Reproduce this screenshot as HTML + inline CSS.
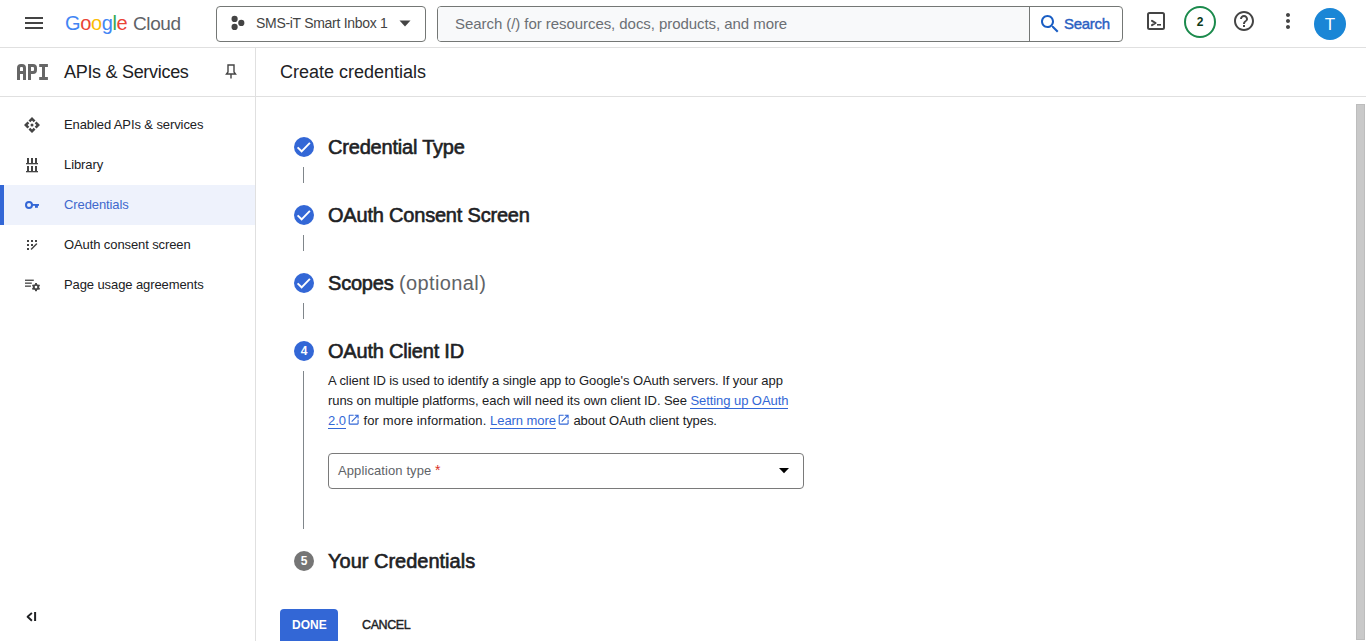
<!DOCTYPE html>
<html><head><meta charset="utf-8">
<style>
*{box-sizing:border-box;margin:0;padding:0}
html,body{width:1366px;height:641px;overflow:hidden;background:#fff;font-family:"Liberation Sans",sans-serif;color:#202124}
.abs{position:absolute}
.t{position:absolute;white-space:nowrap;line-height:1}
svg{position:absolute;overflow:visible}
#topbar{position:absolute;left:0;top:0;width:1366px;height:48px;background:#fff;border-bottom:1px solid #e0e0e0}
#side{position:absolute;left:0;top:48px;width:256px;height:593px;border-right:1px solid #e0e0e0;background:#fff}
#hdr2{position:absolute;left:256px;top:48px;width:1110px;height:49px;border-bottom:1px solid #e0e0e0}
.sbline{position:absolute;left:0;top:96px;width:256px;height:1px;background:#e0e0e0}
.navtxt{position:absolute;left:64px;font-size:13px;color:#202124;white-space:nowrap;line-height:1;letter-spacing:-0.1px}
.step{position:absolute;left:294px;width:20px;height:20px;border-radius:50%;background:#3367d6;color:#fff;font-size:12px;font-weight:bold;text-align:center;line-height:20px}
.stitle{position:absolute;left:328px;font-size:20px;color:#202124;white-space:nowrap;line-height:1;letter-spacing:-0.2px;-webkit-text-stroke:0.6px #202124}
.vl{position:absolute;left:303px;width:1px;background:#80868b}
a{color:#3367d6;text-decoration:none;border-bottom:1px solid #3367d6}
.ext{display:inline-block;width:14px;height:12px;position:relative;vertical-align:-1px}
</style></head><body>
<div id="topbar"></div>
<div id="side"></div>
<div class="sbline"></div>
<div id="hdr2"></div>

<!-- hamburger -->
<div class="abs" style="left:25px;top:17px;width:18px;height:2px;background:#444444"></div>
<div class="abs" style="left:25px;top:22px;width:18px;height:2px;background:#444444"></div>
<div class="abs" style="left:25px;top:27px;width:18px;height:2px;background:#444444"></div>

<!-- Google Cloud logo -->
<div class="t" id="logo" style="left:65px;top:13px;font-size:20px;letter-spacing:-0.4px"><span style="color:#4285f4">G</span><span style="color:#ea4335">o</span><span style="color:#fbbc04">o</span><span style="color:#4285f4">g</span><span style="color:#34a853">l</span><span style="color:#ea4335">e</span></div>
<div class="t" id="cloud" style="left:133px;top:13.5px;font-size:19px;letter-spacing:-0.4px;color:#5f6368">Cloud</div>

<!-- project picker -->
<div class="abs" style="left:216px;top:6px;width:210px;height:36px;border:1px solid #747775;border-radius:4px"></div>
<svg style="left:0;top:0" width="1" height="1"><g fill="#444444"><circle cx="234.6" cy="18.9" r="3.1"/><circle cx="241.3" cy="22.9" r="3.1"/><circle cx="234.6" cy="26.9" r="3.1"/></g>
<path d="M399.5,20.5 H410.5 L405,26.5 Z" fill="#444444"/></svg>
<div class="t" id="proj" style="left:256px;top:16px;font-size:14px;color:#444444;letter-spacing:-0.3px">SMS-iT Smart Inbox 1</div>

<!-- search -->
<div class="abs" style="left:437px;top:6px;width:686px;height:36px;border:1px solid #747775;border-radius:4px;background:#fff;overflow:hidden">
  <div class="abs" style="left:0;top:0;width:592px;height:34px;background:#f8f9fa;border-right:1px solid #747775"></div>
</div>
<div class="t" id="srch" style="left:455px;top:16px;font-size:15px;color:#6b6f74;letter-spacing:-0.06px">Search (/) for resources, docs, products, and more</div>
<svg style="left:1038px;top:12px" width="24" height="24" viewBox="0 0 24 24"><path fill="#1a5ec4" d="M15.5 14h-.79l-.28-.27C15.41 12.59 16 11.11 16 9.5 16 5.910 13.09 3 9.5 3S3 5.91 3 9.5 5.91 16 9.5 16c1.61 0 3.09-.59 4.23-1.57l.27.28v.79l5 4.99L20.49 19l-4.99-5zm-6 0C7.01 14 5 11.99 5 9.5S7.01 5 9.5 5 14 7.01 14 9.5 11.99 14 9.5 14z"/></svg>
<div class="t" id="sbtn" style="left:1064px;top:16px;font-size:15px;color:#2a60c2;letter-spacing:-0.3px;-webkit-text-stroke:0.4px #2a60c2">Search</div>

<!-- terminal -->
<svg style="left:0;top:0" width="1" height="1">
<rect x="1148" y="13" width="16" height="16" rx="1.5" fill="none" stroke="#444444" stroke-width="2"/>
<path d="M1152,20.8 L1155.6,23 L1152,25.2" fill="none" stroke="#444444" stroke-width="2" stroke-linejoin="round" stroke-linecap="round"/>
<rect x="1157" y="24" width="4" height="1.6" fill="#444444"/>
</svg>
<!-- badge -->
<div class="abs" style="left:1184px;top:6px;width:32px;height:32px;border:2px solid #1b8a4c;border-radius:50%"></div>
<div class="t" style="left:1184px;top:16.3px;width:32px;text-align:center;font-size:12px;font-weight:bold;color:#0d3b1a">2</div>
<!-- help -->
<svg style="left:1232px;top:9px" width="24" height="24" viewBox="0 0 24 24"><path fill="#444444" d="M11 18h2v-2h-2v2zm1-16C6.480 2 2 6.48 2 12s4.48 10 10 10 10-4.48 10-10S17.52 2 12 2zm0 18c-4.41 0-8-3.59-8-8s3.590-8 8-8 8 3.59 8 8-3.59 8-8 8zm0-14c-2.21 0-4 1.79-4 4h2c0-1.1.9-2 2-2s2 .9 2 2c0 2-3 1.75-3 5h2c0-2.25 3-2.5 3-5 0-2.21-1.79-4-4-4z"/></svg>
<!-- more vert -->
<svg style="left:1276px;top:9px" width="24" height="24" viewBox="0 0 24 24"><path fill="#444444" d="M12 8c1.1 0 2-.9 2-2s-.9-2-2-2-2 .9-2 2 .9 2 2 2zm0 2c-1.1 0-2 .9-2 2s.9 2 2 2 2-.9 2-2-.9-2-2-2zm0 6c-1.1 0-2 .9-2 2s.9 2 2 2 2-.9 2-2-.9-2-2-2z"/></svg>
<!-- avatar -->
<div class="abs" style="left:1314px;top:8px;width:32px;height:32px;border-radius:50%;background:#1a86d6"></div>
<div class="t" style="left:1314px;top:16px;width:32px;text-align:center;font-size:17px;color:#fff">T</div>

<!-- sidebar header -->
<svg style="left:0;top:0" width="1" height="1"><g fill="none" stroke="#666" stroke-width="3">
<path d="M18.5,80 V68 A2.5,2.5 0 0 1 21,65.5 H22 A2.5,2.5 0 0 1 24.5,68 V80 M18.5,72.5 H24.5"/>
<path d="M29.5,80 V65.5 H33 A2.5,2.5 0 0 1 35.5,68 V70 A2.5,2.5 0 0 1 33,72.5 H29.5"/>
<path d="M39.2,65.5 H47.9 M43.5,65.5 V78.5 M39.2,78.5 H47.9"/>
</g>
<g fill="none" stroke="#444444" stroke-width="1.4">
<path d="M228,65 H234 V72 L235.5,74 H226.5 L228,72 Z"/><path d="M231,74 V78.6"/></g>
</svg>
<div class="t" id="apisvc" style="left:64px;top:63px;font-size:18px;color:#202124;letter-spacing:-0.3px">APIs &amp; Services</div>
<div class="t" id="cc" style="left:280px;top:63px;font-size:18px;color:#202124">Create credentials</div>

<!-- nav -->
<div class="abs" style="left:0;top:185px;width:255px;height:40px;background:#eef2fc"></div>
<div class="abs" style="left:0;top:185px;width:4px;height:40px;background:#3367d6"></div>
<svg style="left:0;top:0" width="1" height="1"><g transform="translate(32,125)" fill="#444444"><path d="M0.00,-8.00 L3.50,-4.50 L1.70,-2.70 L0.00,-4.40 L-1.70,-2.70 L-3.50,-4.50 Z"/><path d="M8.00,0.00 L4.50,3.50 L2.70,1.70 L4.40,0.00 L2.70,-1.70 L4.50,-3.50 Z"/><path d="M0.00,8.00 L-3.50,4.50 L-1.70,2.70 L0.00,4.40 L1.70,2.70 L3.50,4.50 Z"/><path d="M-8.00,0.00 L-4.50,-3.50 L-2.70,-1.70 L-4.40,0.00 L-2.70,1.70 L-4.50,3.50 Z"/><circle cx="0" cy="0" r="1.5"/></g></svg>
<svg style="left:0;top:0" width="1" height="1">
<g fill="#444444"><rect x="27" y="158" width="2" height="5.5"/><rect x="31" y="158" width="2" height="5.5"/><rect x="35" y="158" width="2" height="5.5"/><rect x="26" y="163" width="12" height="1.3"/>
<rect x="27" y="166" width="2" height="5.5"/><rect x="31" y="166" width="2" height="5.5"/><rect x="35" y="166" width="2" height="5.5"/><rect x="26" y="171" width="12" height="1.3"/></g>
<g fill="#3367d6"><path fill-rule="evenodd" d="M29,201 A4,4 0 1 1 29,209 A4,4 0 1 1 29,201 Z M29,203 A2,2 0 1 0 29,207 A2,2 0 1 0 29,203 Z"/><rect x="32" y="204" width="7" height="1.8"/><rect x="35" y="205" width="2.9" height="2.8"/></g>
<g fill="#444444"><rect x="27" y="240" width="2" height="2"/><rect x="31" y="240" width="2" height="2"/><rect x="35" y="240" width="2" height="2"/><rect x="27" y="244" width="2" height="2"/><rect x="31" y="244" width="2" height="2"/><rect x="27" y="248" width="2" height="2"/>
<path d="M31.5,249 L36.5,244" stroke="#444444" stroke-width="1.5" stroke-linecap="round"/></g>
<g fill="#444444"><rect x="25" y="279.6" width="8.8" height="1.3"/><rect x="25" y="282.5" width="6.8" height="1.3"/><rect x="25" y="285.5" width="5.9" height="1.3"/></g>
<g transform="translate(36,287.1)"><path fill="#444444" fill-rule="evenodd" d="M-0.8,-4 h1.6 l0.3,1.1 l1,0.55 l1.1,-0.35 l0.8,1.4 l-0.8,0.8 v1.1 l0.8,0.8 l-0.8,1.4 l-1.1,-0.35 l-1,0.55 l-0.3,1.1 h-1.6 l-0.3,-1.1 l-1,-0.55 l-1.1,0.35 l-0.8,-1.4 l0.8,-0.8 v-1.1 l-0.8,-0.8 l0.8,-1.4 l1.1,0.35 l1,-0.55 Z M0,-1.3 A1.3,1.3 0 1 0 0,1.3 A1.3,1.3 0 1 0 0,-1.3 Z"/></g>
<path d="M31.2,613.6 L27.6,616.8 L31.2,620.1" fill="none" stroke="#202124" stroke-width="1.9" stroke-linejoin="round" stroke-linecap="square"/><rect x="34.1" y="612" width="2" height="9" fill="#202124"/>
</svg>
<div class="navtxt" style="top:118px">Enabled APIs &amp; services</div>
<div class="navtxt" style="top:158px">Library</div>
<div class="navtxt" style="top:198px;color:#4068cc">Credentials</div>
<div class="navtxt" style="top:238px">OAuth consent screen</div>
<div class="navtxt" style="top:278px">Page usage agreements</div>

<!-- steps -->
<svg style="left:0;top:0" width="1" height="1"><g fill="#3367d6"><circle cx="304" cy="147" r="10"/><circle cx="304" cy="215" r="10"/><circle cx="304" cy="283" r="10"/><circle cx="304" cy="351" r="10"/></g>
<g fill="none" stroke="#fff" stroke-width="1.9"><path d="M297.6,147.4 L301.6,151.3 L309.9,142.8"/><path d="M297.6,215.4 L301.6,219.3 L309.9,210.8"/><path d="M297.6,283.4 L301.6,287.3 L309.9,278.8"/></g>
<circle cx="304" cy="561" r="10" fill="#757575"/></svg>
<div class="t" style="left:294px;top:345px;width:20px;text-align:center;font-size:12px;font-weight:bold;color:#fff">4</div>
<div class="t" style="left:294px;top:555px;width:20px;text-align:center;font-size:12px;font-weight:bold;color:#fff">5</div>
<div class="stitle" style="top:137px">Credential Type</div>
<div class="vl" style="top:167px;height:16px"></div>
<div class="stitle" style="top:205px">OAuth Consent Screen</div>
<div class="vl" style="top:235px;height:16px"></div>
<div class="stitle" style="top:273px">Scopes <span style="-webkit-text-stroke:0;color:#5f6368;letter-spacing:0.4px">(optional)</span></div>
<div class="vl" style="top:303px;height:16px"></div>
<div class="stitle" style="top:341px">OAuth Client ID</div>
<div class="vl" style="top:371px;height:158px"></div>
<div class="abs" id="para" style="left:328px;top:371px;width:480px;font-size:13px;line-height:20px;color:#202124;letter-spacing:-0.07px">A client ID is used to identify a single app to Google's OAuth servers. If your app runs on multiple platforms, each will need its own client ID. See <a>Setting up OAuth 2.0</a><span class="ext"><svg style="left:1.3px;top:-1.5px" width="13.3" height="13.3" viewBox="0 0 24 24"><path fill="#3367d6" d="M19 19H5V5h7V3H5c-1.11 0-2 .9-2 2v14c0 1.1.89 2 2 2h14c1.1 0 2-.9 2-2v-7h-2v7zM14 3v2h3.59l-9.830 9.83 1.41 1.41L19 6.41V10h2V3h-7z"/></svg></span> <span style="letter-spacing:0.15px">for more information.</span> <a>Learn more</a><span class="ext"><svg style="left:1.3px;top:-1.5px" width="13.3" height="13.3" viewBox="0 0 24 24"><path fill="#3367d6" d="M19 19H5V5h7V3H5c-1.11 0-2 .9-2 2v14c0 1.1.89 2 2 2h14c1.1 0 2-.9 2-2v-7h-2v7zM14 3v2h3.59l-9.830 9.83 1.41 1.41L19 6.41V10h2V3h-7z"/></svg></span> about OAuth client types.</div>
<div class="abs" style="left:328px;top:453px;width:476px;height:36px;border:1px solid #7a7a7a;border-radius:4px"></div>
<div class="t" style="left:338px;top:463px;font-size:13px;color:#5f6368;letter-spacing:0.1px">Application type <span style="color:#d93025;font-size:14px">*</span></div>
<svg style="left:0;top:0" width="1" height="1"><path d="M779,468 H789 L784,473.2 Z" fill="#000"/></svg>
<div class="stitle" style="top:551px;letter-spacing:0px">Your Credentials</div>

<div class="abs" style="left:280px;top:609px;width:58px;height:36px;border-radius:4px;background:#3367d6"></div>
<div class="t" style="left:292px;top:619px;font-size:12px;font-weight:bold;color:#fff">DONE</div>
<div class="t" style="left:362px;top:619px;font-size:12.5px;color:#202124;letter-spacing:-0.4px;-webkit-text-stroke:0.4px #202124">CANCEL</div>

<!-- scrollbar -->
<div class="abs" style="left:1356px;top:104px;width:9px;height:536px;background:#c9c9c9;border:1px solid #bdbdbd"></div>
</body></html>
